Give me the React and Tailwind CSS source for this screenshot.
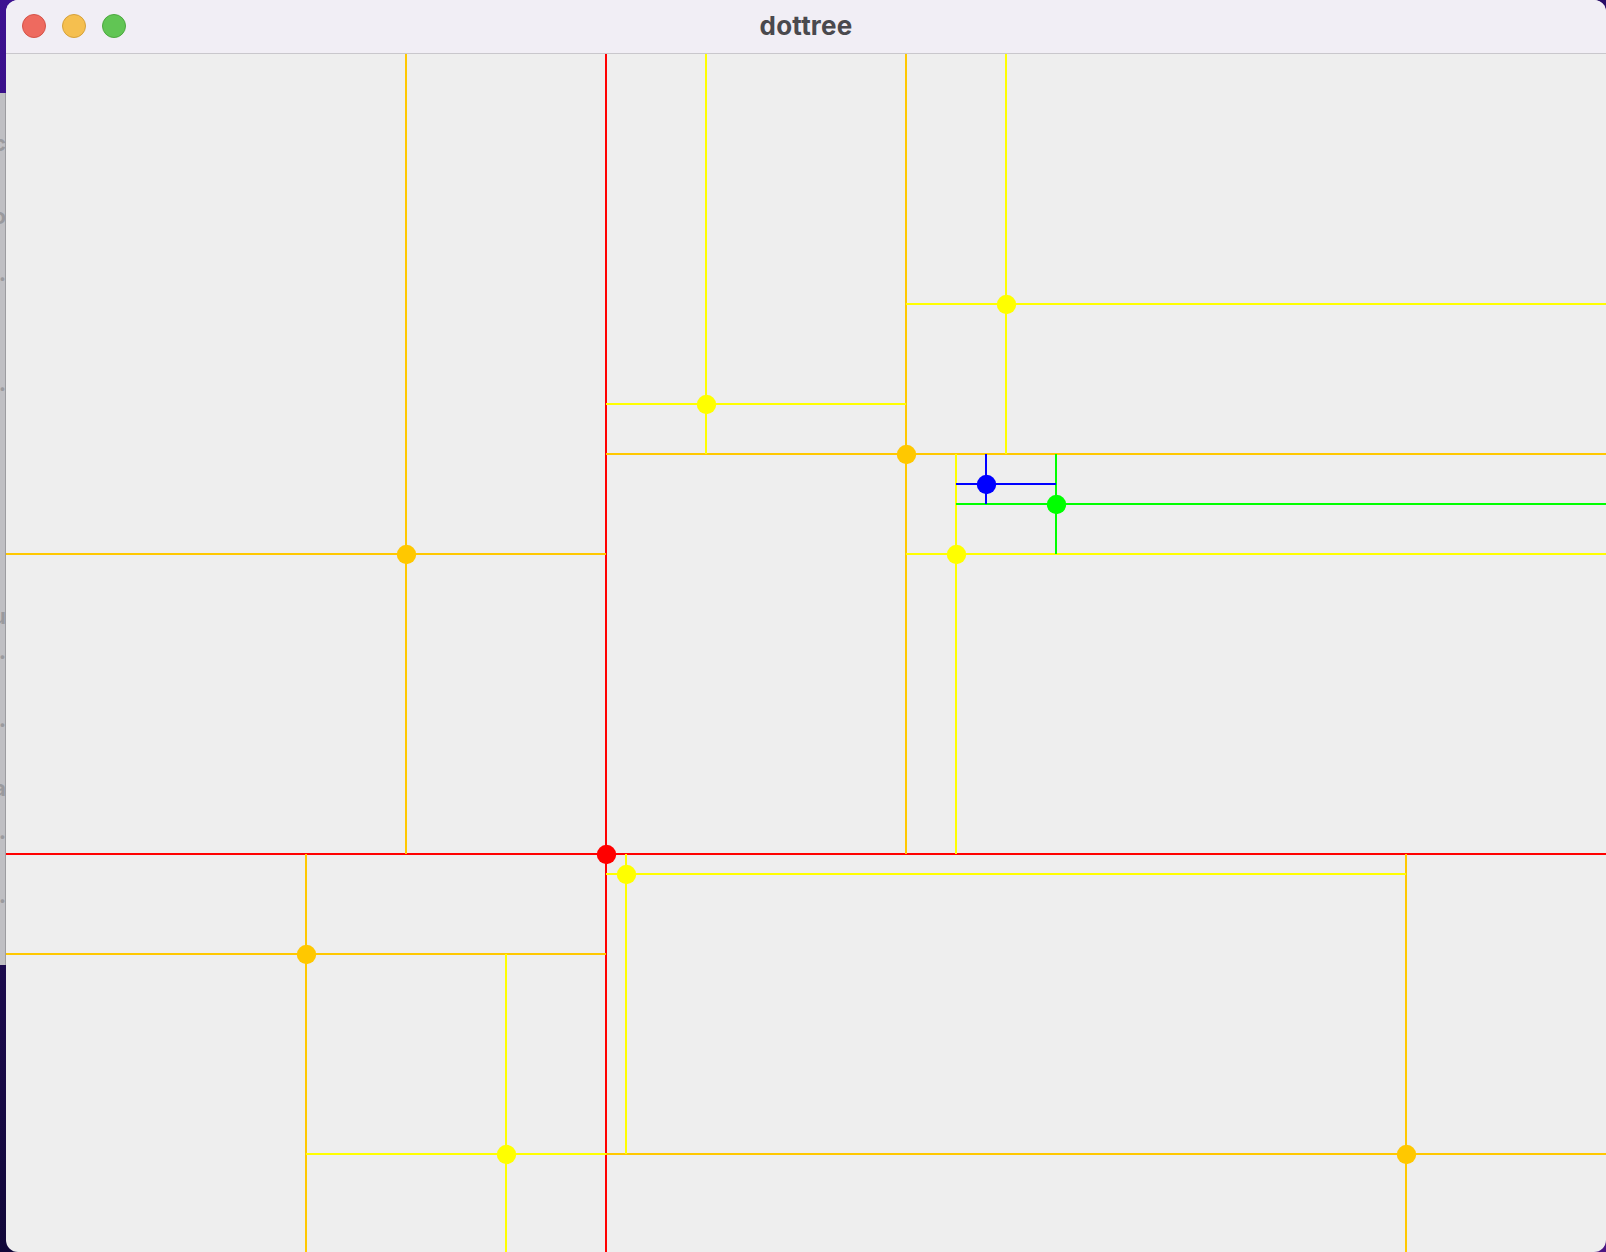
import React from 'react';

// canvas is 1600 x 1198, origin at the window's content corner
const W = 1600;
const H = 1198;

const COLORS = {
  red: '#ff0000',
  orange: '#ffc800',
  yellow: '#ffff00',
  green: '#00ff00',
  blue: '#0000ff',
};

// each point splits its region: vertical line from y0..y1, horizontal from x0..x1
const NODES = [
  { x: 600,  y: 800,  c: 'red',    v: [0, H],      h: [0, W] },
  { x: 400,  y: 500,  c: 'orange', v: [0, 800],    h: [0, 600] },
  { x: 900,  y: 400,  c: 'orange', v: [0, 800],    h: [600, W] },
  { x: 300,  y: 900,  c: 'orange', v: [800, H],    h: [0, 600] },
  { x: 1400, y: 1100, c: 'orange', v: [800, H],    h: [600, W] },
  { x: 700,  y: 350,  c: 'yellow', v: [0, 400],    h: [600, 900] },
  { x: 1000, y: 250,  c: 'yellow', v: [0, 400],    h: [900, W] },
  { x: 950,  y: 500,  c: 'yellow', v: [400, 800],  h: [900, W] },
  { x: 620,  y: 820,  c: 'yellow', v: [800, 1100], h: [600, 1400] },
  { x: 500,  y: 1100, c: 'yellow', v: [900, H],    h: [300, 600] },
  { x: 1050, y: 450,  c: 'green',  v: [400, 500],  h: [950, W] },
  { x: 980,  y: 430,  c: 'blue',   v: [400, 450],  h: [950, 1050] },
];

const GHOST_LETTERS = [
  { top: 132, ch: 'c' },
  { top: 205, ch: 'o' },
  { top: 262, ch: '.' },
  { top: 372, ch: '.' },
  { top: 605, ch: 'u' },
  { top: 640, ch: '.' },
  { top: 708, ch: '.' },
  { top: 777, ch: 'a' },
  { top: 820, ch: '.' },
  { top: 884, ch: '.' },
];

function Tree() {
  return (
    <svg width={W} height={H} viewBox={`0 0 ${W} ${H}`} className="block">
      {NODES.map((n, i) => (
        <g key={'l' + i} fill={COLORS[n.c]} shapeRendering="crispEdges">
          <rect x={n.x - 1} y={n.v[0]} width={2} height={n.v[1] - n.v[0]} />
          <rect x={n.h[0]} y={n.y - 1} width={n.h[1] - n.h[0]} height={2} />
        </g>
      ))}
      {NODES.map((n, i) => (
        <circle key={'d' + i} cx={n.x + 0.5} cy={n.y + 0.5} r={9.7} fill={COLORS[n.c]} />
      ))}
    </svg>
  );
}

export default function App() {
  return (
    <div className="relative w-[1606px] h-[1252px] overflow-hidden bg-[linear-gradient(160deg,#3d1191_0%,#1a0a4a_55%,#0c0630_75%,#4b1583_100%)]">
      {/* window behind, only its right edge peeks out */}
      <div className="absolute left-0 top-[93px] w-[6px] h-[872px] bg-[#bfbfc3] border-r border-[#9c9ca0] overflow-hidden">
        {GHOST_LETTERS.map((g, i) => (
          <span key={i} className="absolute right-[-1px] text-[22px] font-bold text-[#9a9a9e] leading-none" style={{ top: g.top - 93, fontFamily: 'Inter, sans-serif' }}>{g.ch}</span>
        ))}
      </div>

      <div className="ml-[6px] h-full flex flex-col rounded-[12px] overflow-hidden bg-[#eeeeee]">
        <div className="relative h-[54px] shrink-0 bg-[#f1eef5] border-b border-[#c9c7cc] flex items-center justify-center">
          <div className="absolute left-[16px] top-[14px] flex gap-[16px]">
            <span className="w-[24px] h-[24px] rounded-full bg-[#ee6a5f] border border-[#d55248]" />
            <span className="w-[24px] h-[24px] rounded-full bg-[#f5bf4f] border border-[#d6a13a]" />
            <span className="w-[24px] h-[24px] rounded-full bg-[#61c554] border border-[#4ca83f]" />
          </div>
          <span className="text-[26px] font-bold text-[#4a494d] -mt-[2px] tracking-[0.2px]" style={{ fontFamily: 'Inter, "Liberation Sans", sans-serif' }}>dottree</span>
        </div>
        <div className="flex-1 overflow-hidden">
          <Tree />
        </div>
      </div>
    </div>
  );
}
